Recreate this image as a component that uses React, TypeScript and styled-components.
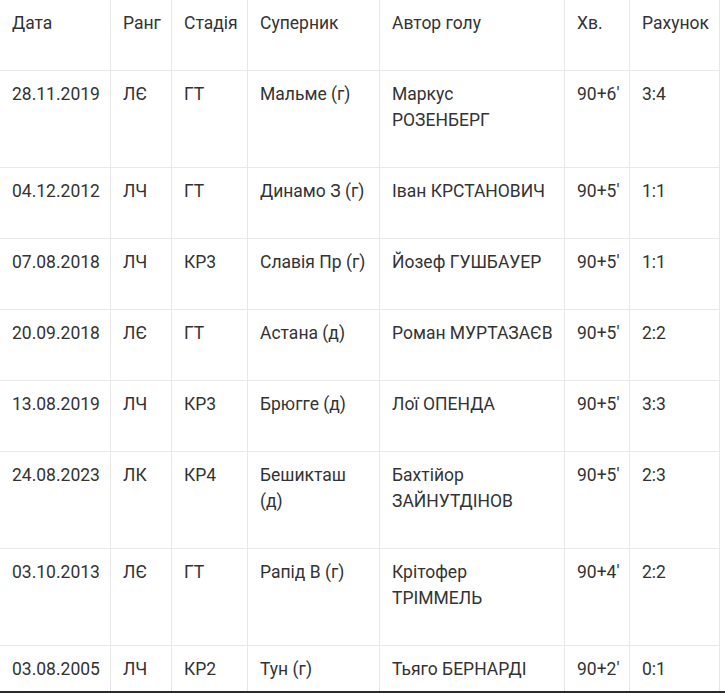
import styled, { createGlobalStyle } from 'styled-components';

type MatchRow = {
  date: string;
  rank: string;
  stage: string;
  rival: string;
  scorer: string;
  minute: string;
  score: string;
};

const columns = ['Дата', 'Ранг', 'Стадія', 'Суперник', 'Автор голу', 'Хв.', 'Рахунок'];
const widths = [111, 61, 76, 132, 185, 65, 90];

const rows: MatchRow[] = [
  { date: '28.11.2019', rank: 'ЛЄ', stage: 'ГТ', rival: 'Мальме (г)', scorer: 'Маркус РОЗЕНБЕРГ', minute: "90+6'", score: '3:4' },
  { date: '04.12.2012', rank: 'ЛЧ', stage: 'ГТ', rival: 'Динамо З (г)', scorer: 'Іван КРСТАНОВИЧ', minute: "90+5'", score: '1:1' },
  { date: '07.08.2018', rank: 'ЛЧ', stage: 'КР3', rival: 'Славія Пр (г)', scorer: 'Йозеф ГУШБАУЕР', minute: "90+5'", score: '1:1' },
  { date: '20.09.2018', rank: 'ЛЄ', stage: 'ГТ', rival: 'Астана (д)', scorer: 'Роман МУРТАЗАЄВ', minute: "90+5'", score: '2:2' },
  { date: '13.08.2019', rank: 'ЛЧ', stage: 'КР3', rival: 'Брюгге (д)', scorer: 'Лої ОПЕНДА', minute: "90+5'", score: '3:3' },
  { date: '24.08.2023', rank: 'ЛК', stage: 'КР4', rival: 'Бешикташ (д)', scorer: 'Бахтійор ЗАЙНУТДІНОВ', minute: "90+5'", score: '2:3' },
  { date: '03.10.2013', rank: 'ЛЄ', stage: 'ГТ', rival: 'Рапід В (г)', scorer: 'Крітофер ТРІММЕЛЬ', minute: "90+4'", score: '2:2' },
  { date: '03.08.2005', rank: 'ЛЧ', stage: 'КР2', rival: 'Тун (г)', scorer: 'Тьяго БЕРНАРДІ', minute: "90+2'", score: '0:1' },
];

const App = () => {
  return (
    <>
      <GlobalStyle />
      <Page>
        <Table>
          <colgroup>
            {widths.map((w, i) => (
              <col key={i} style={{ width: w }} />
            ))}
          </colgroup>
          <thead>
            <tr>
              {columns.map((c) => (
                <HeadCell key={c}>{c}</HeadCell>
              ))}
            </tr>
          </thead>
          <tbody>
            {rows.map((r) => (
              <tr key={r.date + r.scorer}>
                <Cell>{r.date}</Cell>
                <Cell>{r.rank}</Cell>
                <Cell>{r.stage}</Cell>
                <Cell>{r.rival}</Cell>
                <Cell>{r.scorer}</Cell>
                <Cell>{r.minute}</Cell>
                <Cell>{r.score}</Cell>
              </tr>
            ))}
          </tbody>
        </Table>
      </Page>
      <BottomEdge />
    </>
  );
};

export default App;

const GlobalStyle = createGlobalStyle`
  html, body {
    margin: 0;
    background: #fff;
  }
  body {
    font-family: Roboto, "Liberation Sans", sans-serif;
    color: #333;
    overflow: hidden;
  }
`;

const Page = styled.div`
  width: 725px;
  height: 693px;
  overflow: hidden;
`;

const Table = styled.table`
  table-layout: fixed;
  width: 721px;
  margin: -1px 0 0 -1px;
  border-collapse: collapse;
`;

const HeadCell = styled.th`
  padding: 10px 10px 34px 12px;
  border: 1px solid #e8e8e8;

  font-size: 17.5px;
  font-weight: 400;
  line-height: 26px;
  text-align: left;
  vertical-align: top;
`;

const Cell = styled.td`
  padding: 10px 10px 34px 12px;
  border: 1px solid #e8e8e8;

  font-size: 17.5px;
  line-height: 26px;
  vertical-align: top;
`;

const BottomEdge = styled.div`
  position: fixed;
  left: 0;
  right: 0;
  bottom: 0;
  height: 2px;
  background: #2a2a2a;
`;
